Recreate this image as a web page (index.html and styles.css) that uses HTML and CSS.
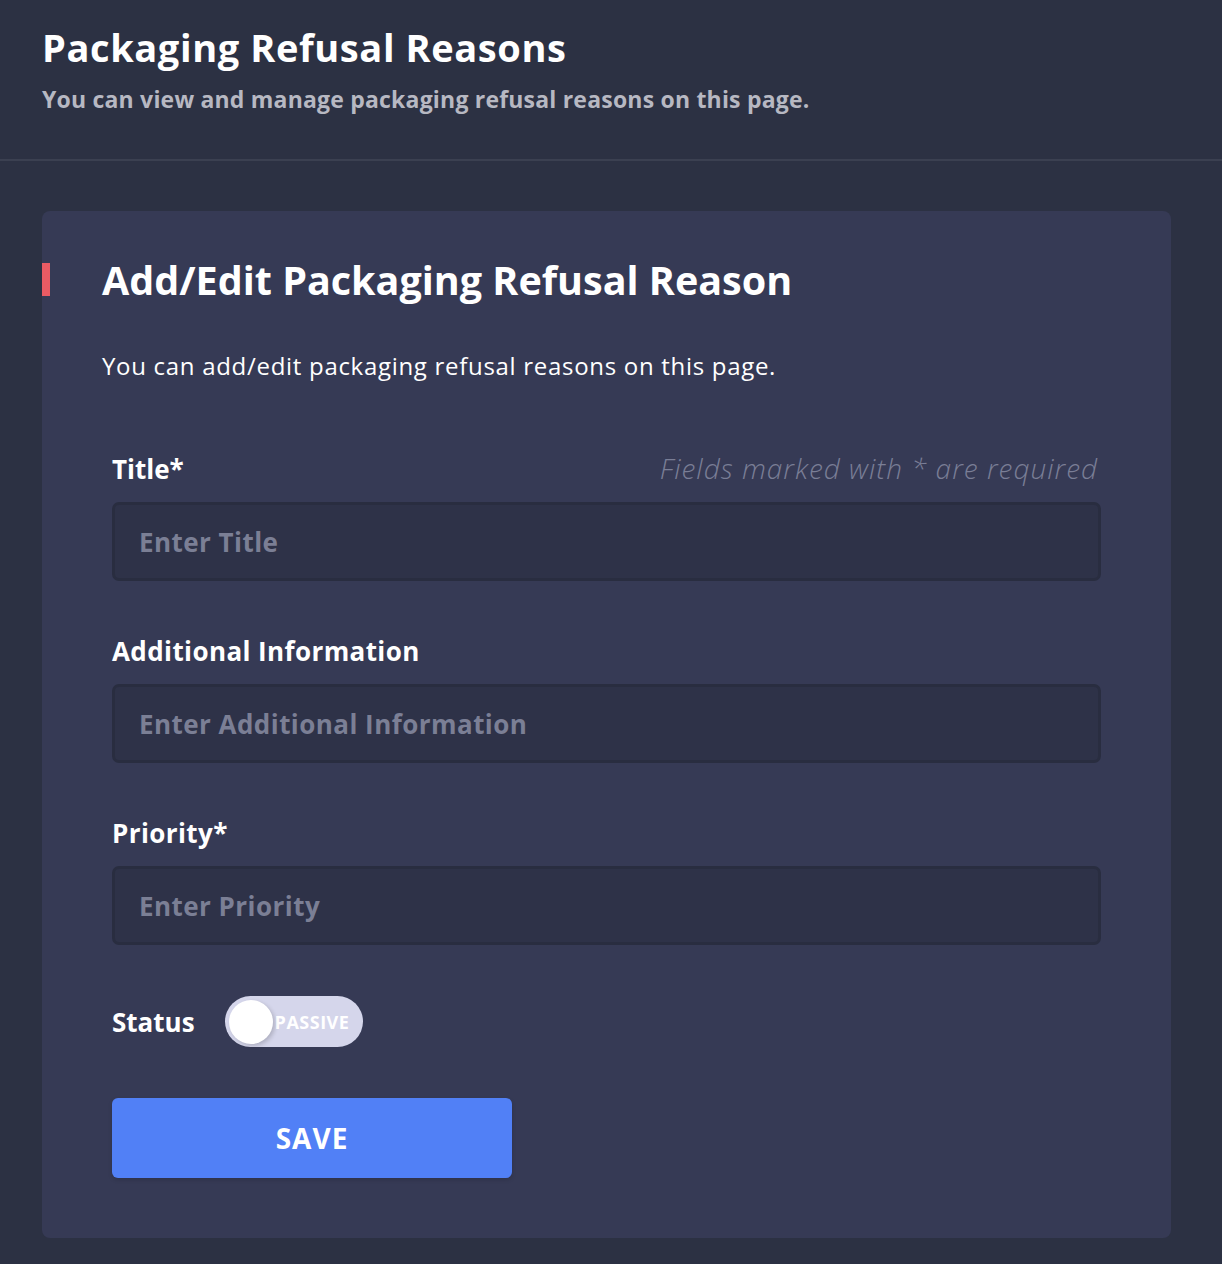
FILE: index.html
```html
<!DOCTYPE html>
<html lang="en">
<head>
<meta charset="utf-8">
<title>Packaging Refusal Reasons</title>
<link rel="stylesheet" href="styles.css">
</head>
<body>
<header class="page-header">
  <h1 class="page-title">Packaging Refusal Reasons</h1>
  <p class="page-subtitle">You can view and manage packaging refusal reasons on this page.</p>
</header>
<main class="page-main">
  <section class="card">
    <h2 class="card-title">Add/Edit Packaging Refusal Reason</h2>
    <p class="card-desc">You can add/edit packaging refusal reasons on this page.</p>
    <form class="form">
      <div class="label-row">
        <label class="label" for="title">Title*</label>
        <span class="required-note">Fields marked with * are required</span>
      </div>
      <input class="input" id="title" type="text" placeholder="Enter Title">

      <div class="label-row">
        <label class="label" for="info">Additional Information</label>
      </div>
      <input class="input" id="info" type="text" placeholder="Enter Additional Information">

      <div class="label-row">
        <label class="label" for="priority">Priority*</label>
      </div>
      <input class="input" id="priority" type="text" placeholder="Enter Priority">

      <div class="status-row">
        <span class="label">Status</span>
        <span class="toggle"><span class="knob"></span><span class="toggle-text">PASSIVE</span></span>
      </div>

      <button class="save" type="button">SAVE</button>
    </form>
  </section>
</main>
</body>
</html>
```
FILE: styles.css
```css
* { box-sizing: border-box; }
html, body {
  margin: 0;
  padding: 0;
}
body {
  background: #2c3143;
  font-family: "Open Sans", Lato, sans-serif;
  color: #ffffff;
  min-height: 1264px;
}
.page-header {
  padding: 25px 42px 46px;
  border-bottom: 2px solid #3b4051;
}
.page-title {
  margin: 0;
  font-size: 38px;
  line-height: 44px;
  font-weight: 700;
  letter-spacing: 0.6px;
  color: #ffffff;
}
.page-subtitle {
  margin: 16px 0 0;
  font-size: 23px;
  line-height: 28px;
  font-weight: 700;
  letter-spacing: 0.2px;
  color: #b7b8c2;
}
.page-main {
  padding: 50px 51px 27px 42px;
}
.card {
  background: #363a55;
  border-radius: 8px;
  padding: 46px 70px 60px 70px;
}
.card-title {
  position: relative;
  margin: 0 0 0 -10px;
  font-size: 39.5px;
  line-height: 46px;
  font-weight: 700;
  color: #ffffff;
}
.card-title::before {
  content: "";
  position: absolute;
  left: -60px;
  top: 6px;
  width: 8px;
  height: 33px;
  background: #ea5b64;
}
.card-desc {
  margin: 48px 0 0 -10px;
  font-size: 24px;
  line-height: 30px;
  font-weight: 400;
  letter-spacing: 0.7px;
  color: #ffffff;
}
.form {
  display: flex;
  flex-direction: column;
  margin-top: 71px;
}
.label-row {
  display: flex;
  justify-content: space-between;
  align-items: baseline;
  margin-top: 54px;
}
.label-row:first-child { margin-top: 0; }
.label {
  font-size: 26px;
  line-height: 32px;
  font-weight: 700;
  letter-spacing: 0.4px;
  color: #ffffff;
}
.label-row:first-child .label {
  letter-spacing: 0;
}
.required-note {
  font-size: 28px;
  line-height: 32px;
  font-style: italic;
  font-weight: 300;
  letter-spacing: 1px;
  color: #7a7e96;
  padding-right: 3px;
}
.input {
  margin-top: 17px;
  height: 79px;
  width: 100%;
  background: #2e3248;
  border: 3px solid #292d40;
  border-radius: 7px;
  padding: 0 24px;
  font-family: "Open Sans", Lato, sans-serif;
  font-size: 26px;
  font-weight: 700;
  letter-spacing: 0.45px;
  color: #ffffff;
  outline: none;
}
.input::placeholder {
  color: #7b7f95;
  opacity: 1;
}
.status-row {
  display: flex;
  align-items: center;
  gap: 30px;
  margin-top: 51px;
}
.status-row .label {
  letter-spacing: 0;
}
.toggle {
  position: relative;
  display: flex;
  align-items: center;
  width: 138px;
  height: 51px;
  border-radius: 26px;
  background: #d5d6eb;
}
.knob {
  position: absolute;
  left: 4px;
  top: 4px;
  width: 44px;
  height: 44px;
  border-radius: 50%;
  background: #ffffff;
  box-shadow: 2px 2px 4px rgba(0,0,0,0.18);
}
.toggle-text {
  margin-left: 50px;
  font-size: 18px;
  font-weight: 700;
  color: #ffffff;
  letter-spacing: 0.5px;
}
.save {
  margin-top: 51px;
  width: 400px;
  height: 80px;
  border: none;
  border-radius: 6px;
  background: #5180f6;
  color: #ffffff;
  font-family: "Open Sans", Lato, sans-serif;
  font-size: 28px;
  font-weight: 700;
  letter-spacing: 1px;
  box-shadow: 0 2px 4px rgba(0,0,0,0.15);
}
```
